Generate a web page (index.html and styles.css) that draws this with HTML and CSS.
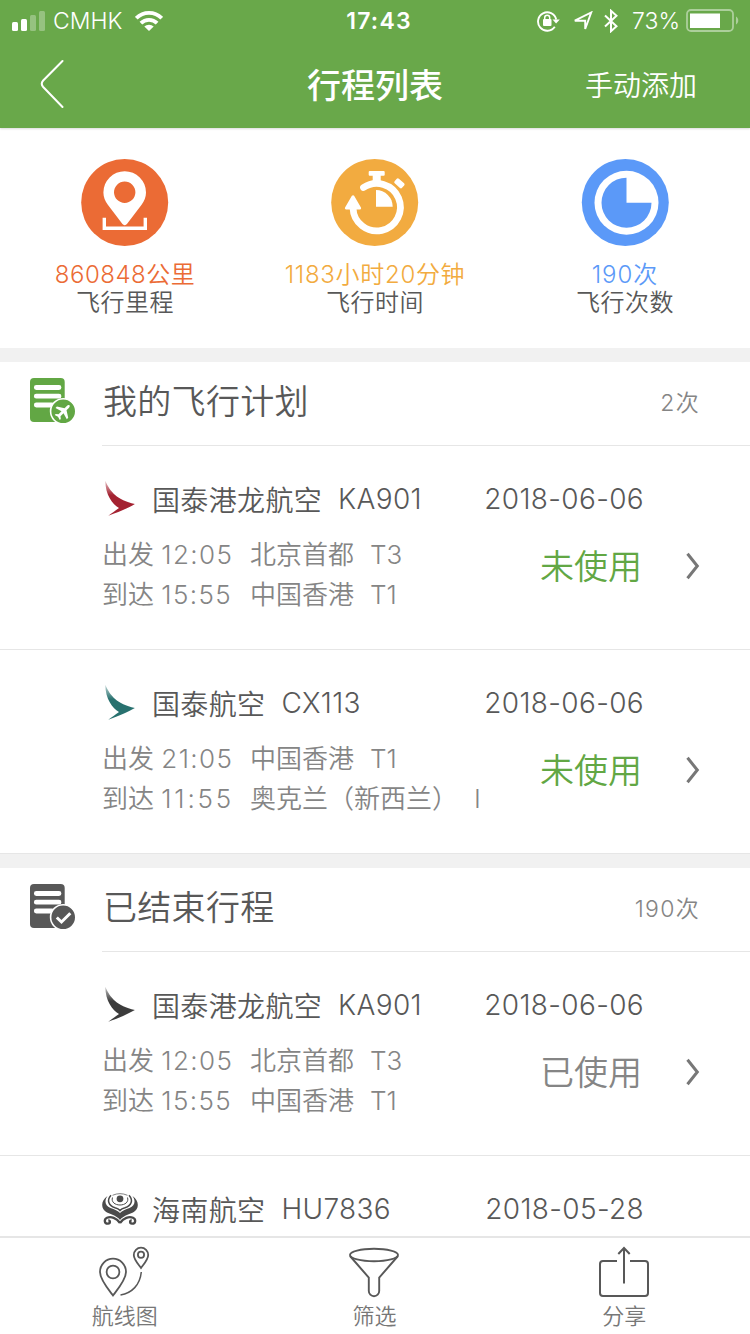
FILE: index.html
```html
<!DOCTYPE html>
<html lang="zh-CN">
<head>
  <meta charset="UTF-8" />
  <meta name="viewport" content="width=device-width, initial-scale=1" />
  <title>行程列表</title>
  <link rel="stylesheet" href="styles.css">
</head>
<body>
  <svg class="defs" width="0" height="0">
    <defs>
      <linearGradient id="fade" x1="0" y1="0" x2="0" y2="1">
        <stop offset="0" stop-color="#fff" stop-opacity="0.25" />
        <stop offset="0.4" stop-color="#fff" />
      </linearGradient>
      <mask id="wingMask" maskUnits="userSpaceOnUse" x="0" y="0" width="32" height="38">
        <rect width="32" height="38" fill="url(#fade)" />
      </mask>
      <symbol id="wing" viewBox="0 0 32 38">
        <path mask="url(#wingMask)" fill="currentColor" d="M.3.7C5 11.500 12 20 29.900 24 24 27.500 14 32 3.300 35.700 7 33 10 31 14 28 7 23.500.5 15 .3.700z" />
      </symbol>
      <symbol id="arrow" viewBox="0 0 14 28">
        <path d="M1.500 1.800 11.300 14 1.500 26.200" fill="none" stroke="currentColor" stroke-width="3" />
      </symbol>
      <symbol id="doc" viewBox="0 0 47 47">
        <rect width="34.700" height="44" rx="4" fill="currentColor" />
        <path d="M6.300 9.500H29M6.300 18.200H29M6.300 27H22" stroke="#fff" stroke-width="4.800" stroke-linecap="round" />
        <circle cx="33.200" cy="33.300" r="12.600" fill="currentColor" stroke="#fff" stroke-width="1.600" />
      </symbol>
    </defs>
  </svg>

  <header class="header">
    <div class="status-bar">
      <div class="status-left">
        <svg width="34" height="20" viewBox="0 0 34 20" fill="#fff">
          <rect y="11" width="6" height="9" rx="1.500" />
          <rect x="9" y="8" width="6" height="12" rx="1.500" />
          <rect x="18" y="4" width="6" height="16" rx="1.500" opacity=".3" />
          <rect x="27" width="6" height="20" rx="1.500" opacity=".3" />
        </svg>
        <span class="carrier">CMHK</span>
        <svg width="28" height="20" viewBox="0 0 28 20" fill="none" stroke="#fff" stroke-width="3.800">
          <path d="M1.300 7.200a18 18 0 0 1 25.400 0" />
          <path d="M5.900 12.200a11.500 11.500 0 0 1 16.200 0" />
          <path d="M14 20 9.300 15.600a6.600 6.600 0 0 1 9.400 0z" fill="#fff" stroke="none" />
        </svg>
      </div>
      <div class="clock">17:43</div>
      <div class="status-right">
        <svg width="23" height="22" viewBox="0 0 23 22">
          <path d="M17.800 16.800A9.200 9.200 0 1 1 19.200 9.500" fill="none" stroke="#fff" stroke-width="1.900" />
          <path d="M15.500 9.500h7.300l-3.700 4z" fill="#fff" />
          <rect x="6" y="9" width="8.500" height="7" rx="1" fill="#fff" />
          <path d="M7.700 10V7.700a2.500 2.500 0 0 1 5 0V10" fill="none" stroke="#fff" stroke-width="1.500" />
        </svg>
        <svg class="location" width="20" height="20" viewBox="0 0 20 20">
          <path d="M1.800 9.700 18.200 1.500 12.200 18V9.700z" fill="none" stroke="#fff" stroke-width="1.900" />
        </svg>
        <svg class="bluetooth" width="14" height="24" viewBox="0 0 14 24">
          <path d="M1 6.500 12.500 17.200 7 22.200V1.800L12.500 6.800 1 17.500" fill="none" stroke="#fff" stroke-width="2" />
        </svg>
        <span class="percent">73%</span>
        <svg width="54" height="24" viewBox="0 0 54 24">
          <rect x="1" y="1" width="46" height="21" rx="4" fill="none" stroke="#fff" stroke-width="1.800" opacity=".45" />
          <rect x="4" y="4.500" width="30" height="14.500" fill="#fff" />
          <path d="M50 7.500c3 1.500 3 6.500 0 8z" fill="#fff" opacity=".45" />
        </svg>
      </div>
    </div>
    <nav class="nav">
      <a class="back" href="#">
        <svg width="24" height="50" viewBox="0 0 24 50">
          <path d="M22.500 2 3.200 21.500Q.3 24.700 3.200 28L22.500 48" fill="none" stroke="#fff" stroke-width="2" stroke-linecap="round" />
        </svg>
      </a>
      <h1 class="title">行程列表</h1>
      <a class="add" href="#">手动添加</a>
    </nav>
  </header>

  <section class="stats">
    <div class="stat">
      <svg width="88" height="88" viewBox="0 0 88 88">
        <circle cx="43.700" cy="43.500" r="43.500" fill="#eb6b35" />
        <path fill="#fff" fill-rule="evenodd" d="M43.700 66.200c-1.200 0-2-.8-3-2.200L27 46c-3-4-4.600-8-4.600-12.500a21.300 21.300 0 0 1 42.600 0c0 4.500-1.600 8.500-4.600 12.500L46.700 64c-1 1.400-1.800 2.200-3 2.200zM43.700 22.600a10.700 10.700 0 1 0 0 21.400 10.700 10.700 0 0 0 0-21.400z" />
        <path d="M23.300 58.700V69.200H64.300V58.700" fill="none" stroke="#fff" stroke-width="3.400" />
      </svg>
      <p class="value mileage">860848公里</p>
      <p class="label">飞行里程</p>
    </div>
    <div class="stat">
      <svg width="88" height="88" viewBox="0 0 88 88">
        <circle cx="43.700" cy="43.500" r="43.500" fill="#f2ab40" />
        <path d="M22 49A23.700 23.700 0 1 0 32.500 28.500" fill="none" stroke="#fff" stroke-width="6.800" stroke-linecap="round" />
        <path d="M22 37.500 15.200 49.200H28.800z" fill="#fff" stroke="#fff" stroke-width="2.600" stroke-linejoin="round" />
        <rect x="37.700" y="12" width="16" height="4.800" rx="1" fill="#fff" />
        <rect x="41.700" y="15" width="8" height="8" fill="#fff" />
        <rect x="63.400" y="21.200" width="10" height="6.200" rx="1.500" fill="#fff" transform="rotate(42 68.400 24.300)" />
        <path d="M45 47.700V31a16.700 16.700 0 0 1 16.700 16.700z" fill="#fff" />
      </svg>
      <p class="value duration">1183小时20分钟</p>
      <p class="label">飞行时间</p>
    </div>
    <div class="stat">
      <svg width="88" height="88" viewBox="0 0 88 88">
        <circle cx="44.300" cy="43.500" r="43.500" fill="#5b99f8" />
        <circle cx="45.500" cy="43.700" r="32" fill="#fff" />
        <path d="M45.500 18.700a25 25 0 1 0 25 25h-25z" fill="#5b99f8" />
      </svg>
      <p class="value times">190次</p>
      <p class="label">飞行次数</p>
    </div>
  </section>

  <section class="group">
    <div class="group-head">
      <svg class="group-icon green" width="47" height="47" viewBox="0 0 47 47">
        <use href="#doc" />
        <g fill="#fff" transform="translate(33.200 33.500) rotate(45)">
          <path d="M0-8.800c1 0 1.400 1 1.400 2.300v3.200L8 .9v2L1.400 1v4.200L3.600 7v1.400L0 7.400l-3.600 1V7l2.200-1.800V1L-8 2.900v-2l6.600-4.200v-3.200C-1.400-7.800-1-8.800 0-8.800z" />
        </g>
      </svg>
      <h2>我的飞行计划</h2>
      <span class="count">2次</span>
    </div>

    <div class="flight">
      <div class="flight-top">
        <svg class="wing red" width="32" height="38"><use href="#wing" /></svg>
        <span class="airline">国泰港龙航空</span>
        <span class="number">KA901</span>
        <span class="date">2018-06-06</span>
      </div>
      <div class="flight-bottom">
        <div class="route">
          <p><span class="when">出发 <b>12:05</b></span><span>北京首都</span><span class="terminal">T3</span></p>
          <p><span class="when">到达 <b>15:55</b></span><span>中国香港</span><span class="terminal">T1</span></p>
        </div>
        <span class="state unused">未使用</span>
        <svg class="arrow" width="14" height="28"><use href="#arrow" /></svg>
      </div>
    </div>

    <div class="flight">
      <div class="flight-top">
        <svg class="wing teal" width="32" height="38"><use href="#wing" /></svg>
        <span class="airline">国泰航空</span>
        <span class="number">CX113</span>
        <span class="date">2018-06-06</span>
      </div>
      <div class="flight-bottom">
        <div class="route">
          <p><span class="when">出发 <b>21:05</b></span><span>中国香港</span><span class="terminal">T1</span></p>
          <p><span class="when">到达 <b class="loose">11:55</b></span><span>奥克兰（新西兰）</span><span class="terminal">I</span></p>
        </div>
        <span class="state unused">未使用</span>
        <svg class="arrow" width="14" height="28"><use href="#arrow" /></svg>
      </div>
    </div>
  </section>

  <section class="group">
    <div class="group-head">
      <svg class="group-icon dark" width="47" height="47" viewBox="0 0 47 47">
        <use href="#doc" />
        <path d="M26.800 33.500 31.500 38 40.300 29.300" fill="none" stroke="#fff" stroke-width="3" />
      </svg>
      <h2>已结束行程</h2>
      <span class="count">190次</span>
    </div>

    <div class="flight">
      <div class="flight-top">
        <svg class="wing black" width="32" height="38"><use href="#wing" /></svg>
        <span class="airline">国泰港龙航空</span>
        <span class="number">KA901</span>
        <span class="date">2018-06-06</span>
      </div>
      <div class="flight-bottom">
        <div class="route">
          <p><span class="when">出发 <b>12:05</b></span><span>北京首都</span><span class="terminal">T3</span></p>
          <p><span class="when">到达 <b>15:55</b></span><span>中国香港</span><span class="terminal">T1</span></p>
        </div>
        <span class="state">已使用</span>
        <svg class="arrow" width="14" height="28"><use href="#arrow" /></svg>
      </div>
    </div>

    <div class="flight">
      <div class="flight-top">
        <svg class="hna" width="36" height="33" viewBox="0 0 36 33">
          <path fill="#4a4a4a" d="M5.500 3C-1.500 8-1.500 16 5 19.500c5 2.300 10 3.500 13 7.500 3-4 8-5.200 13-7.500 6.500-3.500 6.500-11.500-.5-16.500 3.500 5 2.500 9.500-3 12-4 1.500-7.500 2.500-9.500 5-2-2.500-5.500-3.500-9.500-5C3 12.500 2 8 5.500 3z" />
          <circle cx="18" cy="5.800" r="3.400" fill="#4a4a4a" />
          <g fill="none" stroke="#4a4a4a">
            <path d="M9 2.200C4.500 7 6.500 12.700 13 14.800q3.500 1 5 2.700 1.500-1.700 5-2.700C29.500 12.700 31.500 7 27 2.200" stroke-width="1.500" />
            <path d="M10.500 4.500C9 9 13 12 18 12s9-3 7.500-7.500" stroke-width="1" />
            <path d="M10.500 2.300Q18-1 25.500 2.300" stroke-width=".7" />
            <path d="M18 30C14.500 25 9 23 5 24.800 1.500 26.500 2.500 31 6 30.700c2.500-.3 2.500-3.400.3-3.200" stroke-width="2.300" />
            <path d="M18 30c3.500-5 9-7 13-5.200 3.500 1.700 2.500 6.200-1 5.900-2.500-.3-2.500-3.400-.3-3.200" stroke-width="2.300" />
          </g>
        </svg>
        <span class="airline">海南航空</span>
        <span class="number">HU7836</span>
        <span class="date">2018-05-28</span>
      </div>
    </div>
  </section>

  <footer class="tabs">
    <a class="tab" href="#">
      <svg width="52" height="52" viewBox="0 0 52 52" fill="none" stroke="#585858" stroke-width="1.800">
        <path d="M14 49.500C9 43 1 33.500 1 26a13 13.300 0 0 1 26 0c0 7.500-8 17-13 23.500z" />
        <circle cx="14" cy="26" r="6.400" />
        <path d="M42 22c-2.500-3.500-7.200-8.500-7.200-13a7.200 7.400 0 0 1 14.400 0c0 4.500-4.700 9.500-7.200 13z" />
        <circle cx="42" cy="8.700" r="3.100" />
        <path d="M42.300 26C41 39 33 47 21.500 49" stroke-width="1.500" />
      </svg>
      <span>航线图</span>
    </a>
    <a class="tab" href="#">
      <svg width="52" height="52" viewBox="0 0 52 52" fill="none" stroke="#585858" stroke-width="1.900">
        <ellipse cx="26" cy="9" rx="24" ry="6.300" />
        <path d="M2 10 20.800 31.500V45a5.200 5.200 0 0 0 10.400 0V31.500L50 10" />
      </svg>
      <span>筛选</span>
    </a>
    <a class="tab" href="#">
      <svg width="52" height="52" viewBox="0 0 52 52" fill="none" stroke="#585858" stroke-width="2">
        <path d="M19 15H5a3 3 0 0 0-3 3V47a3 3 0 0 0 3 3H47a3 3 0 0 0 3-3V18a3 3 0 0 0-3-3H32" />
        <path d="M26 37.500V2M20.300 8 26 2 31.700 8" />
      </svg>
      <span>分享</span>
    </a>
  </footer>
</body>
</html>
```

FILE: styles.css
```css
* {
  box-sizing: border-box;
}
body {
  margin: 0;
  height: 1334px;
  overflow: hidden;
  display: flex;
  flex-direction: column;
  background: #fff;
  color: #585858;
  font-family: Inter, "Noto Sans CJK SC", sans-serif;
  font-weight: 350;
}
h1, h2, p {
  margin: 0;
  font-weight: inherit;
}
a {
  color: inherit;
  text-decoration: none;
}
svg {
  display: block;
  flex: none;
}
span {
  white-space: nowrap;
}
.defs {
  position: absolute;
}
.header {
  flex: none;
  height: 128px;
  background: #69a84a;
  color: #fff;
  box-shadow: 0 1px 2px rgba(0, 0, 0, 0.15);
}
.status-bar {
  height: 40px;
  display: grid;
  grid-template-columns: 1fr auto 1fr;
  align-items: center;
  padding: 0 10px 0 12px;
  font-size: 23px;
  line-height: 40px;
}
.status-left,
.status-right {
  display: flex;
  align-items: center;
}
.status-right {
  justify-content: flex-end;
}
.carrier {
  margin: 1px 13px 0 7px;
}
.clock {
  padding: 1px 0 0 6px;
  font-weight: 600;
  letter-spacing: 1.2px;
}
.location {
  margin-left: 13px;
}
.bluetooth {
  margin: 0 14px 0 11px;
}
.percent {
  margin: 1px 6px 0 0;
}
.nav {
  height: 88px;
  display: grid;
  grid-template-columns: 1fr auto 1fr;
  align-items: center;
  padding: 0 53px 0 40px;
}
.title {
  padding: 3px 0 0 13px;
  font-size: 34px;
  font-weight: 500;
  line-height: 50px;
}
.add {
  padding-top: 4px;
  text-align: right;
  font-size: 28px;
  line-height: 50px;
}
.stats {
  flex: none;
  height: 220px;
  display: grid;
  grid-template-columns: repeat(3, 1fr);
  padding-top: 31px;
}
.stat {
  display: flex;
  flex-direction: column;
  align-items: center;
  font-size: 24px;
  line-height: 28px;
  letter-spacing: 0.5px;
}
.value {
  margin-top: 14px;
}
.mileage {
  color: #eb6b35;
}
.duration {
  color: #f2ab40;
  letter-spacing: 0.7px;
}
.times {
  color: #5b99f8;
  letter-spacing: 1px;
}
.group {
  flex: none;
  border-top: 14px solid #f1f1f1;
}
.group-head {
  height: 84px;
  display: flex;
  align-items: center;
  padding: 0 50px 6px 30px;
  background: linear-gradient(#e6e6e6, #e6e6e6) 102px 100% / 100% 1px no-repeat;
}
.group-icon {
  margin-right: 26px;
}
.group-head h2 {
  flex: 1;
  padding-top: 2px;
  font-size: 34px;
  line-height: 50px;
  letter-spacing: 0.3px;
}
.count {
  color: #858585;
  font-size: 23px;
  letter-spacing: 1.3px;
}
.green {
  color: #62a744;
}
.dark {
  color: #585858;
}
.flight {
  height: 204px;
  padding: 33px 50px 0 102px;
  border-bottom: 1px solid #e6e6e6;
}
.flight-top {
  display: flex;
  align-items: center;
  height: 40px;
  font-size: 28px;
  letter-spacing: 0.35px;
}
.wing {
  margin: 0 15px 0 3px;
}
.red {
  color: #a42231;
}
.teal {
  color: #28716f;
}
.black {
  color: #3c3c3c;
}
.hna {
  margin-right: 14px;
}
.number {
  margin-left: 16px;
}
.date {
  margin: 0 56px 0 auto;
}
.flight-bottom {
  display: flex;
  align-items: flex-start;
  margin-top: 15px;
}
.route {
  flex: 1;
  width: 0;
  padding-top: 1px;
  color: #858585;
  font-size: 26px;
  line-height: 40px;
}
.route p {
  display: flex;
}
.when {
  width: 148px;
}
.when b {
  font-weight: inherit;
  letter-spacing: 1.4px;
}
.when .loose {
  letter-spacing: 2.8px;
}
.terminal {
  margin-left: 16px;
}
.state {
  margin-right: 44px;
  color: #858585;
  font-size: 34px;
  line-height: 66px;
}
.state.unused {
  color: #62a744;
}
.arrow {
  margin-top: 18px;
  color: #777;
}
/* bottom bar stays above the list */
.tabs {
  position: fixed;
  left: 0;
  right: 0;
  bottom: 0;
  height: 98px;
  display: grid;
  grid-template-columns: repeat(3, 1fr);
  padding: 8px 1px 0 0;
  background: #fff;
  border-top: 2px solid #e6e6e6;
}
.tab {
  display: flex;
  flex-direction: column;
  align-items: center;
  color: #777;
  font-size: 22px;
  line-height: 30px;
}
.tab span {
  margin-top: 3px;
}
```
